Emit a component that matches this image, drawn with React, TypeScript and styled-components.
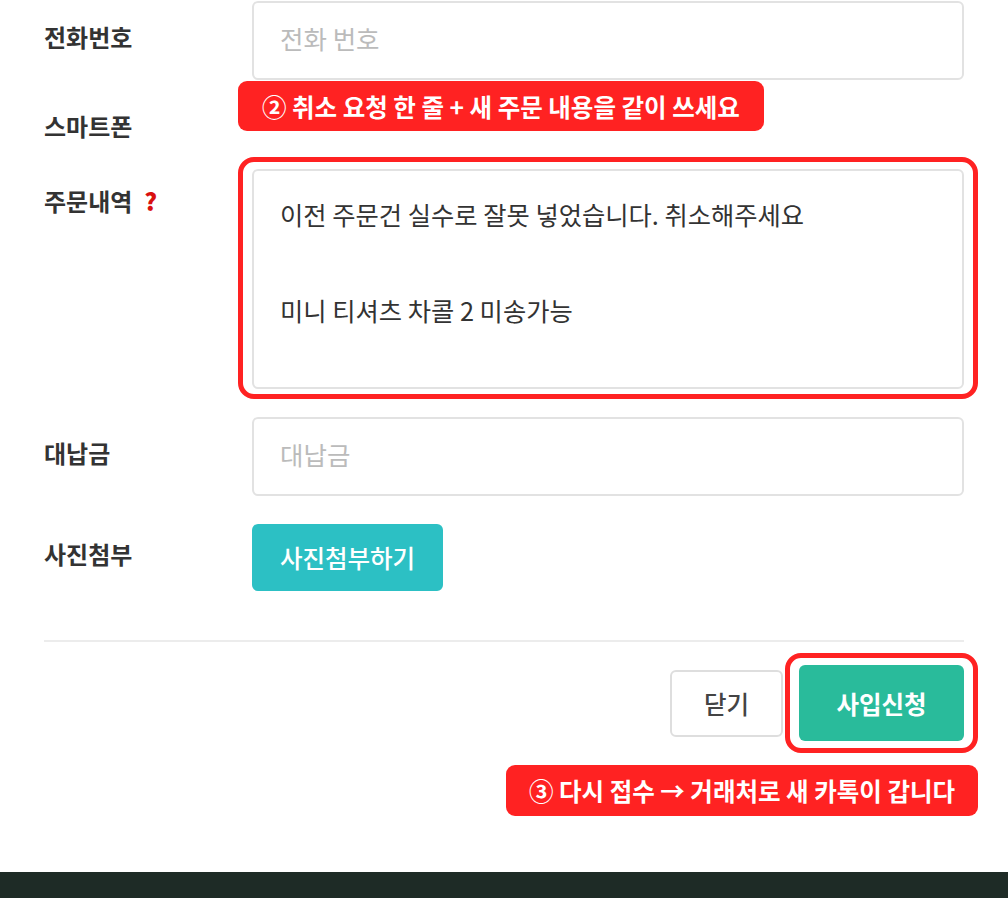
import React from "react";
import styled, { createGlobalStyle } from "styled-components";

const Global = createGlobalStyle`
  html, body { margin: 0; padding: 0; background: #fff; }
  body { font-family: "Noto Sans CJK KR", "Noto Sans", sans-serif; color: #333; }
  * { box-sizing: border-box; }
`;

const Page = styled.div`
  width: 1008px;
  min-height: 898px;
  display: flex;
  flex-direction: column;
  overflow: hidden;
`;

const Form = styled.div`
  padding: 1px 44px 0;
  display: flex;
  flex-direction: column;
  gap: 28px;
`;

const Row = styled.div<{ $top?: boolean; $h?: number; $mt?: number }>`
  display: grid;
  grid-template-columns: 208px 1fr;
  align-items: ${(p) => (p.$top ? "start" : "center")};
  min-height: ${(p) => (p.$h ? `${p.$h}px` : "auto")};
  margin-top: ${(p) => p.$mt ?? 0}px;
`;

const Label = styled.div<{ $pt?: number; $pb?: number }>`
  font-size: 24px;
  font-weight: 700;
  color: #333;
  line-height: 30px;
  padding-top: ${(p) => p.$pt ?? 0}px;
  padding-bottom: ${(p) => p.$pb ?? 8}px;
  display: flex;
  align-items: center;
  gap: 12px;
`;

const Help = styled.span`
  color: #d9100f;
  font-weight: 900;
  font-size: 24px;
`;

const Field = styled.div`
  position: relative;
  align-self: stretch;
`;

const Input = styled.input`
  width: 100%;
  height: 79px;
  border: 2px solid #e2e2e2;
  border-radius: 6px;
  padding: 0 26px 6px;
  font-family: inherit;
  font-size: 25.5px;
  color: #333;
  outline: none;
  &::placeholder { color: #bbb; }
`;

const TextArea = styled.textarea`
  display: block;
  width: 100%;
  height: 220px;
  border: 2px solid #e2e2e2;
  border-radius: 6px;
  padding: 19px 26px;
  font-family: inherit;
  font-size: 25.3px;
  line-height: 48px;
  color: #333;
  resize: none;
  outline: none;
`;

const Highlight = styled.div<{ $t: number; $b: number }>`
  position: relative;
  &::before {
    content: "";
    position: absolute;
    top: -${(p) => p.$t}px;
    bottom: -${(p) => p.$b}px;
    left: -14px;
    right: -14px;
    border: 5px solid #ff2222;
    border-radius: 16px;
    pointer-events: none;
  }
`;

const Callout = styled.div`
  background: #ff2222;
  color: #fff;
  font-weight: 700;
  font-size: 24.5px;
  height: 51px;
  border-radius: 9px;
  padding: 0 24px;
  display: inline-flex;
  align-items: center;
  white-space: nowrap;
`;

const FloatingCallout = styled(Callout)`
  position: absolute;
  top: -27px;
  left: -14px;
  height: 50px;
  z-index: 2;
`;

const PhotoButton = styled.button`
  width: 191px;
  height: 67px;
  border: none;
  border-radius: 6px;
  background: #2cc0c4;
  color: #fff;
  font-family: inherit;
  font-size: 24.5px;
  font-weight: 500;
`;

const Divider = styled.hr`
  margin: 49px 44px 0;
  border: none;
  border-top: 2px solid #ececec;
`;

const Actions = styled.div`
  padding: 0 44px;
  display: flex;
  flex-direction: column;
  align-items: flex-end;
`;

const ButtonRow = styled.div`
  margin-top: 23px;
  display: flex;
  align-items: center;
  gap: 16px;
`;

const Btn = styled.button<{ $primary?: boolean }>`
  font-family: inherit;
  font-size: 24.5px;
  border-radius: 6px;
  ${(p) =>
    p.$primary
      ? `width: 165px; height: 76px; background: #29bb9b; color: #fff; border: none; font-weight: 700;`
      : `width: 113px; height: 67px; background: #fff; color: #444; border: 2px solid #dedede; font-weight: 500;`}
`;

const BottomCallout = styled(Callout)`
  margin-top: 24px;
  margin-right: -14px;
  padding: 0 23px;
`;

const Footer = styled.div`
  margin-top: 56px;
  height: 100px;
  background: #1e2b26;
`;

export default function App() {
  return (
    <Page>
      <Global />
      <Form>
        <Row>
          <Label>전화번호</Label>
          <Input placeholder="전화 번호" />
        </Row>
        <Row $h={33}>
          <Label $pt={3} $pb={0}>스마트폰</Label>
          <Field>
            <FloatingCallout>② 취소 요청 한 줄 + 새 주문 내용을 같이 쓰세요</FloatingCallout>
          </Field>
        </Row>
        <Row $top>
          <Label $pt={17} $pb={0}>
            주문내역 <Help>?</Help>
          </Label>
          <Highlight $t={12} $b={10}>
            <TextArea
              defaultValue={"이전 주문건 실수로 잘못 넣었습니다. 취소해주세요\n\n미니 티셔츠 차콜 2 미송가능"}
            />
          </Highlight>
        </Row>
        <Row>
          <Label>대납금</Label>
          <Input placeholder="대납금" />
        </Row>
        <Row>
          <Label>사진첨부</Label>
          <div>
            <PhotoButton>사진첨부하기</PhotoButton>
          </div>
        </Row>
      </Form>
      <Divider />
      <Actions>
        <ButtonRow>
          <Btn>닫기</Btn>
          <Highlight $t={12} $b={12}>
            <Btn $primary>사입신청</Btn>
          </Highlight>
        </ButtonRow>
        <BottomCallout>③ 다시 접수 → 거래처로 새 카톡이 갑니다</BottomCallout>
      </Actions>
      <Footer />
    </Page>
  );
}
